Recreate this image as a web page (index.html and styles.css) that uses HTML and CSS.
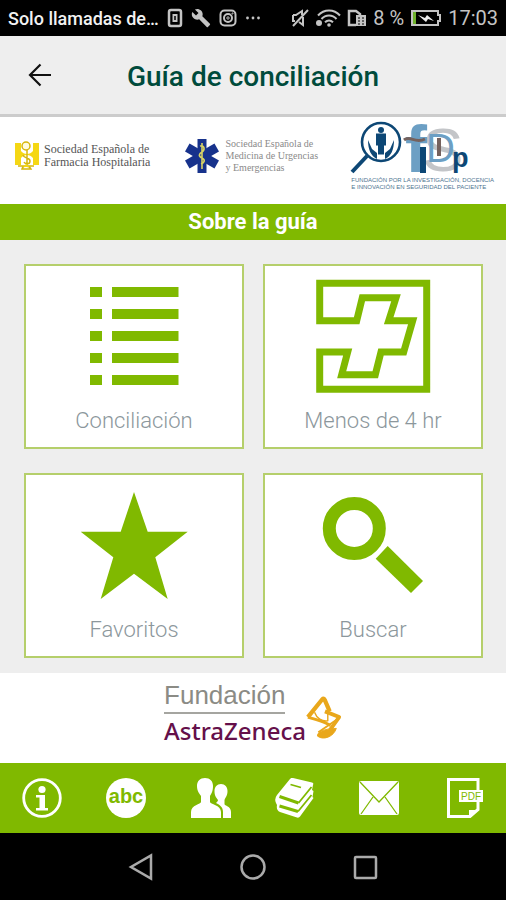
FILE: index.html
```html
<!DOCTYPE html>
<html lang="es">
<head>
<meta charset="utf-8">
<meta name="viewport" content="width=device-width, initial-scale=1">
<title>Guía de conciliación</title>
<link rel="stylesheet" href="styles.css">
</head>
<body>
<div class="statusbar">
  <span class="carrier">Solo llamadas de…</span>
  <div class="notices">
    <svg width="16" height="20" viewBox="0 0 16 20" fill="none" stroke="currentColor"><rect x="2" y="2" width="12" height="16" rx="2" stroke-width="2.500"/><rect x="5.500" y="6" width="5" height="8" fill="currentColor" stroke="none"/><path d="M8 8v4" stroke="#000" stroke-width="1.500"/></svg>
    <svg width="20" height="20" viewBox="0 0 24 24" fill="currentColor"><path d="M22.700 19l-9.100-9.100c.9-2.300.4-5-1.500-6.900-2-2-5-2.400-7.400-1.300L9 6 6 9 1.600 4.700C.4 7.100.9 10.100 2.900 12.100c1.900 1.900 4.600 2.400 6.900 1.500l9.100 9.100c.4.4 1 .4 1.400 0l2.300-2.300c.5-.4.5-1.100.1-1.400z"/></svg>
    <svg width="18" height="18" viewBox="0 0 18 18" fill="none" stroke="currentColor" stroke-width="2"><rect x="1.500" y="1.500" width="15" height="15" rx="4"/><circle cx="9" cy="9" r="4"/><circle cx="9" cy="9" r="1.200" stroke-width="1"/><circle cx="13.500" cy="4.500" r=".6" stroke-width="1"/></svg>
    <svg width="16" height="18" viewBox="0 0 16 18" fill="currentColor"><circle cx="2.500" cy="9" r="1.400"/><circle cx="8" cy="9" r="1.400"/><circle cx="13.500" cy="9" r="1.400"/></svg>
  </div>
  <div class="system">
    <svg width="18" height="20" viewBox="0 0 18 20" fill="none" stroke="currentColor" stroke-width="2"><path d="M2 7h3l6-4v4M12 9v8l-4-3M2 7v6h2M17 2L2 18"/></svg>
    <svg width="26" height="20" viewBox="0 0 26 20" fill="none" stroke="currentColor" stroke-width="2"><path d="M3 7.500C9 .8 19 .8 25 7.500M6.500 11c4-4.600 11-4.600 15 0M10 14.200c2.400-2.400 5.600-2.400 8 0"/><circle cx="14" cy="17" r="1.800" fill="currentColor" stroke="none"/><circle cx="4" cy="15" r="3" fill="currentColor" stroke="none"/></svg>
    <svg width="20" height="20" viewBox="0 0 20 20" fill="none" stroke="currentColor" stroke-width="2.500"><path d="M9 17H2V3h7l4 3v2"/><rect x="9" y="7" width="10" height="11" fill="currentColor" stroke="none"/><path d="M11 10h2M15 10h2M11 13h2M15 13h2M11 16h2M15 16h2" stroke="#000" stroke-width="1"/></svg>
    <span>8 %</span>
    <svg width="32" height="18" viewBox="0 0 32 18"><path d="M2 2h26v4h2v6h-2v4H2z" fill="none" stroke="currentColor" stroke-width="2"/><path d="M3 3h3v12H3z" fill="#6fb22c"/><path d="M8 6l7 3 2-3 7 6-6-2-2 3z" fill="#eee"/></svg>
    <time>17:03</time>
  </div>
</div>

<header class="header">
  <button class="back" type="button" aria-label="Volver"><svg width="24" height="24" viewBox="0 0 24 24" fill="none" stroke="#111" stroke-width="2.200"><path d="M23 12H2M12.500 1.500L2 12l10.500 10.500"/></svg></button>
  <h1>Guía de conciliación</h1>
</header>

<main>
  <section class="partners">
    <div class="partner">
      <svg width="26" height="30" viewBox="0 0 26 30"><path d="M1 2h6v8c3 4 9 4 12 0V2h6v22h-6v-7c-3-4-9-4-12 0v7H1z" fill="#f5d714"/><g fill="none" stroke="#d6b70d" stroke-width="1.500"><circle cx="12" cy="5" r="4" fill="#fffbe0"/><path d="M13 9v15M9 14c1 4 7 2 7 6s-5 3-6 1M4 25h16M8 28c1-4 7-4 9 0z"/></g><path d="M12 23l4 3H9z" fill="#f5d714"/></svg>
      <p>Sociedad Española de<br>Farmacia Hospitalaria</p>
    </div>
    <div class="partner partner-light">
      <svg width="36" height="36" viewBox="0 0 36 36"><g fill="#17328c"><path d="M13.500 1h9v34h-9z"/><path d="M13.500 1h9v34h-9z" transform="rotate(60 18 18)"/><path d="M13.500 1h9v34h-9z" transform="rotate(120 18 18)"/></g><path d="M18 5v26M16 8c5-1 5 4 2 6s-4 4 0 6 2 5-1 6" fill="none" stroke="#d8d365" stroke-width="1.600"/></svg>
      <p>Sociedad Española de<br>Medicina de Urgencias<br>y Emergencias</p>
    </div>
    <div class="foundation">
      <svg width="116" height="56" viewBox="0 0 116 56">
        <g class="fidp">
          <text class="s" x="71" y="50" font-size="62">S</text>
          <text class="f" x="54" y="51" font-size="66">f</text>
          <text class="d" x="75" y="41" font-size="40">D</text>
          <text class="p" x="101" y="46" font-size="27">p</text>
        </g>
        <path d="M69 26h6v26h-6z" fill="#0d4775"/><path d="M86 17h4v18h-4z" fill="#75625e"/>
        <path d="M53 19c6-5 11 4 21-1" fill="none" stroke="#75625e" stroke-width="3"/>
        <circle cx="30" cy="21" r="19" fill="#fff" stroke="#0d4775" stroke-width="2.600"/><path d="M16 35L1 51" stroke="#0d4775" stroke-width="4"/>
        <g fill="#0d4775"><circle cx="30" cy="9" r="3"/><path d="M25 12.500h10v12h-2v9h-6v-9h-2z"/><path d="M17 19l4 9 5 4v6c-6-3-9-9-9-19zM43 19l-4 9-5 4v6c6-3 9-9 9-19z"/></g>
      </svg>
      <p>FUNDACIÓN POR LA INVESTIGACIÓN, DOCENCIA<br>E INNOVACIÓN EN SEGURIDAD DEL PACIENTE</p>
    </div>
  </section>

  <h2 class="band">Sobre la guía</h2>

  <nav class="menu" aria-label="Menú">
    <a class="card" href="#conciliacion">
      <svg width="120" height="120" viewBox="0 0 120 120" fill="currentColor"><path d="M16 11h12v10H16zM38 11h66.500v10H38zM16 33h12v10H16zM38 33h66.500v10H38zM16 55h12v10H16zM38 55h66.500v10H38zM16 77h12v10H16zM38 77h66.500v10H38zM16 99h12v10H16zM38 99h66.500v10H38z"/></svg>
      <span>Conciliación</span>
    </a>
    <a class="card" href="#menos4">
      <svg width="120" height="120" viewBox="0 0 120 120" fill="none" stroke="currentColor" stroke-width="7"><path d="M6.700 7.300h107v106H6.700V76h28l-6 22.700h33.600L68 76h22.700l9-31.300h-24l7.300-23H49.300l-5.600 23h-37z"/></svg>
      <span>Menos de 4 hr</span>
    </a>
    <a class="card" href="#favoritos">
      <svg width="120" height="120" viewBox="0 0 120 120" fill="currentColor"><path d="M60 7l13.700 39.700h40L81.300 72.300 93.700 114 60 88.700 26.700 114l12.600-41.700L6.700 46.700h40z"/></svg>
      <span>Favoritos</span>
    </a>
    <a class="card" href="#buscar">
      <svg width="120" height="120" viewBox="0 0 120 120"><circle cx="41.300" cy="43.400" r="25" fill="none" stroke="currentColor" stroke-width="13"/><path d="M74.700 61L110 96l-12 12-35.300-34.300z" fill="currentColor"/></svg>
      <span>Buscar</span>
    </a>
  </nav>

  <section class="sponsor">
    <div class="sponsor-name">
      <span class="sponsor-top">Fundación</span>
      <span class="sponsor-main">AstraZeneca</span>
    </div>
    <svg width="36" height="46" viewBox="0 0 38 46" fill="none" stroke="#e9a71b" stroke-linejoin="round"><path d="M2 22L17 3.500q2-2 3 1L25 16" stroke-width="4.500"/><path d="M2 22c8 3 16 4 24 9" stroke-width="3"/><path d="M9 17c2 6 8 10 14 9V18" stroke-width="1.500"/><path d="M20 16l15 6-10 14" stroke-width="4"/><path d="M35 23L13 38" stroke-width="2"/><path d="M12 42c0-6 12-8 20-8-3 9-14 13-20 8z" fill="#e9a71b" stroke-width="1"/></svg>
  </section>
</main>

<nav class="tabs" aria-label="Secciones">
  <a href="#info" aria-label="Información"><svg width="40" height="40" viewBox="0 0 40 40"><circle cx="20" cy="20" r="18.300" fill="none" stroke="#fff" stroke-width="2.800"/><circle cx="20" cy="11.500" r="3.600" fill="#fff"/><path d="M14 17h9v13h3v2.500H14V30h3.500V19.500H14z" fill="#fff"/></svg></a>
  <a href="#abc" aria-label="Glosario"><svg width="40" height="40" viewBox="0 0 40 40"><circle cx="20" cy="20" r="20" fill="#fff"/><text class="abc" x="20" y="25" text-anchor="middle">abc</text></svg></a>
  <a href="#autores" aria-label="Autores"><svg width="40" height="40" viewBox="0 0 40 40" fill="#fff"><path d="M14 0c5 0 8 3 8 8 0 6-2 8-3 10v6c0 2 11 3 11 10v6H0v-6c0-7 10-8 10-10v-6C9 16 6 14 6 8c0-5 3-8 8-8z"/><path d="M30 6c4 0 6.500 3 6.500 7 0 5-2 6-3 9v4c0 2 6.500 2 6.500 8v6h-8v-6c0-5-3-7-7-9 1-1 2-2 2-3-2-3-3.500-4-3.500-9 0-4 2.500-7 6.500-7z"/></svg></a>
  <a href="#bibliografia" aria-label="Bibliografía"><svg width="40" height="40" viewBox="0 0 40 40"><path d="M15 1q1-1.500 3-1l19 4.500q2 .5 1 2.500l-1 5 1.500 1-1 6 1 1L25 38.500q-1 1.500-3 1L5 34q-4-2-3-7l-1-2q-2-4 1-8z" fill="#fff"/><path d="M4.500 18.500L23.500 25M4.500 28L23 33.500" fill="none" stroke="#80b900" stroke-width="3"/><path d="M23.500 25l13-16M23 33.500L36.500 17M15.500 6.500L26 9.500" fill="none" stroke="#80b900" stroke-width="1.800"/></svg></a>
  <a href="#contacto" aria-label="Contacto"><svg width="40" height="40" viewBox="0 0 40 40"><rect y="3" width="40" height="34" rx="2" fill="#fff"/><path d="M1 4l19 20L39 4M2 36l12-17M38 36L26 19" fill="none" stroke="#80b900" stroke-width="1.300"/></svg></a>
  <a href="#pdf" aria-label="PDF"><svg width="40" height="40" viewBox="0 0 40 40"><path d="M34 12V1.500H4.500v37H26l8-7V22" fill="none" stroke="#fff" stroke-width="3"/><path d="M25 39v-7h9z" fill="#fff"/><rect x="15" y="12" width="24" height="12" fill="#fff"/><text class="pdf" x="27" y="22" text-anchor="middle">PDF</text></svg></a>
</nav>

<div class="softkeys">
  <button type="button" aria-label="Atrás"><svg width="28" height="28" viewBox="0 0 28 28"><path d="M24 2.500v23L4 14z"/></svg></button>
  <button type="button" aria-label="Inicio"><svg width="28" height="28" viewBox="0 0 28 28"><circle cx="14" cy="14" r="11.500"/></svg></button>
  <button type="button" aria-label="Recientes"><svg width="28" height="28" viewBox="0 0 28 28"><rect x="4" y="4" width="21" height="21" rx="1"/></svg></button>
</div>
</body>
</html>
```
FILE: styles.css
```css
* { box-sizing: border-box; }

body {
  display: flex;
  flex-direction: column;
  min-height: 100vh;
  margin: 0;
  background: #eee;
  font-family: Roboto, sans-serif;
}

h1, h2, p { margin: 0; }
svg { display: block; flex: none; }
a { color: inherit; text-decoration: none; }

button {
  padding: 0;
  border: 0;
  background: none;
}

.statusbar {
  display: flex;
  align-items: center;
  gap: 8px;
  height: 36px;
  padding: 0 8px;
  background: #000;
  color: #c4c4c4;
  font-size: 20px;
}

.carrier {
  color: #f2f2f2;
  font-size: 18px;
  font-weight: 500;
}

.notices, .system {
  display: flex;
  align-items: center;
  gap: 8px;
}

.system {
  flex: 1;
  justify-content: flex-end;
  gap: 6px;
  white-space: nowrap;
}

.header {
  display: grid;
  grid-template-columns: 80px 1fr 80px;
  align-items: center;
  height: 81px;
  border-bottom: 3px solid #ccc;
}

.back { justify-self: center; }

.header h1 {
  padding-top: 2px;
  color: #004b3c;
  font-size: 28px;
  font-weight: 500;
  text-align: center;
  white-space: nowrap;
}

.partners {
  display: flex;
  align-items: center;
  justify-content: space-between;
  height: 87px;
  padding: 0 12px 10px 14px;
  background: #fff;
}

.partner {
  display: flex;
  align-items: center;
  gap: 4px;
  color: #555;
  font: 12px/13px "Liberation Serif", serif;
  white-space: nowrap;
}

.partner-light {
  gap: 6px;
  color: #8a8a8a;
  font-size: 10px;
  line-height: 12px;
}

.foundation svg { overflow: visible; }

.foundation p {
  color: #4d7390;
  font: 6px/7px "Liberation Sans", sans-serif;
  white-space: nowrap;
}

.fidp { font-family: "Liberation Sans", sans-serif; }
.fidp .s { fill: #c3c5c8; }
.fidp .f { fill: #6c9fc4; font-weight: 700; }
.fidp .d { fill: #6c9fc4; }
.fidp .p { fill: #0d4775; font-weight: 700; }

.band {
  background: #80b900;
  color: #fff;
  font-size: 22px;
  font-weight: 700;
  line-height: 36px;
  text-align: center;
}

.menu {
  display: grid;
  grid-template-columns: 1fr 1fr;
  gap: 24px 19px;
  padding: 24px 23px 15px 24px;
}

.card {
  display: flex;
  flex-direction: column;
  align-items: center;
  gap: 11px;
  height: 185px;
  padding-top: 10px;
  border: 2px solid #b5cf6b;
  background: #fff;
  color: #80b900;
}

.card span {
  color: #8c979c;
  font-size: 22px;
  font-weight: 300;
  line-height: 28px;
}

.sponsor {
  display: flex;
  align-items: center;
  justify-content: center;
  height: 90px;
  background: #fff;
}

.sponsor-name {
  display: flex;
  flex-direction: column;
  align-items: flex-start;
  padding-bottom: 10px;
  white-space: nowrap;
}

.sponsor-top {
  border-bottom: 2px solid #a5a5a0;
  color: #8b8b85;
  font: 26px/34px "Liberation Sans", sans-serif;
}

.sponsor-main {
  color: #65104a;
  font: 500 24px/34px "Noto Sans", sans-serif;
}

.tabs {
  display: grid;
  grid-template-columns: repeat(6, 1fr);
  place-items: center;
  height: 70px;
  background: #80b900;
}

.abc {
  fill: #80b900;
  font: 700 20px "Liberation Sans", sans-serif;
}

.pdf {
  fill: #80b900;
  font: 10px "Liberation Sans", sans-serif;
}

.softkeys {
  display: flex;
  flex: 1;
  align-items: center;
  justify-content: center;
  gap: 84px;
  min-height: 66px;
  background: #000;
}

.softkeys svg {
  fill: none;
  stroke: #aaa;
  stroke-width: 2.5px;
}
```
